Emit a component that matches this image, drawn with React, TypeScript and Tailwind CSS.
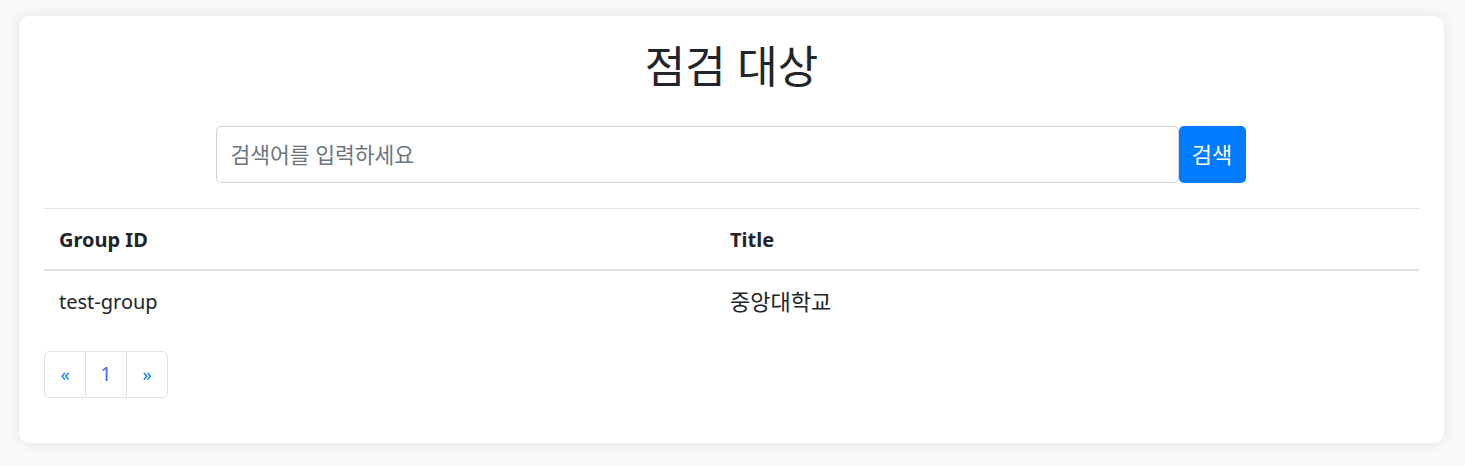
import React from "react";

export default function App() {
  const font = { fontFamily: '"Noto Sans", "Noto Sans CJK KR", sans-serif' };
  return (
    <div className="min-h-[466px] bg-[#f8f9fa] pl-[19px] pr-[21px] pt-[16px] pb-[24px]" style={font}>
      <div className="rounded-[10px] bg-white shadow-[0_0_14px_rgba(0,0,0,0.09)] px-[25px] pt-[26px] pb-[45px] text-[#212529]">
        <h1 className="text-center text-[44px] leading-[48px] font-normal m-0">점검 대상</h1>
        <div className="mt-[36px] flex justify-center">
          <div className="flex w-[1030px] mr-[2px]">
            <input
              className="h-[57px] flex-1 rounded-[5px] border border-[#ced4da] px-[14px] text-[21.5px] text-[#495057] placeholder:text-[#6c757d] outline-none"
              placeholder="검색어를 입력하세요"
            />
            <button className="h-[57px] w-[67px] rounded-[5px] bg-[#007bff] text-[22px] text-white">검색</button>
          </div>
        </div>
        <table className="mt-[25px] w-full border-collapse text-[20px]">
          <thead>
            <tr className="border-t border-[#dee2e6]">
              <th className="w-[671px] h-[61px] border-b-2 border-[#dee2e6] px-[15px] pt-[3px] text-left font-bold">Group ID</th>
              <th className="h-[61px] border-b-2 border-[#dee2e6] px-[15px] pt-[3px] text-left font-bold">Title</th>
            </tr>
          </thead>
          <tbody>
            <tr>
              <td className="h-[61px] px-[15px] pt-[2px]">test-group</td>
              <td className="h-[61px] px-[15px] pt-[2px] text-[22px]">중앙대학교</td>
            </tr>
          </tbody>
        </table>
        <div className="mt-[20px] flex">
          <div className="flex h-[47px] rounded-[5px] border border-[#dee2e6] text-[#007bff]">
            <span className="flex w-[41px] items-center justify-center border-r border-[#dee2e6] text-[18px]">«</span>
            <span className="flex w-[41px] items-center justify-center border-r border-[#dee2e6] text-[20px] text-[#3f6ff2]">1</span>
            <span className="flex w-[40px] items-center justify-center text-[18px]">»</span>
          </div>
        </div>
      </div>
    </div>
  );
}
